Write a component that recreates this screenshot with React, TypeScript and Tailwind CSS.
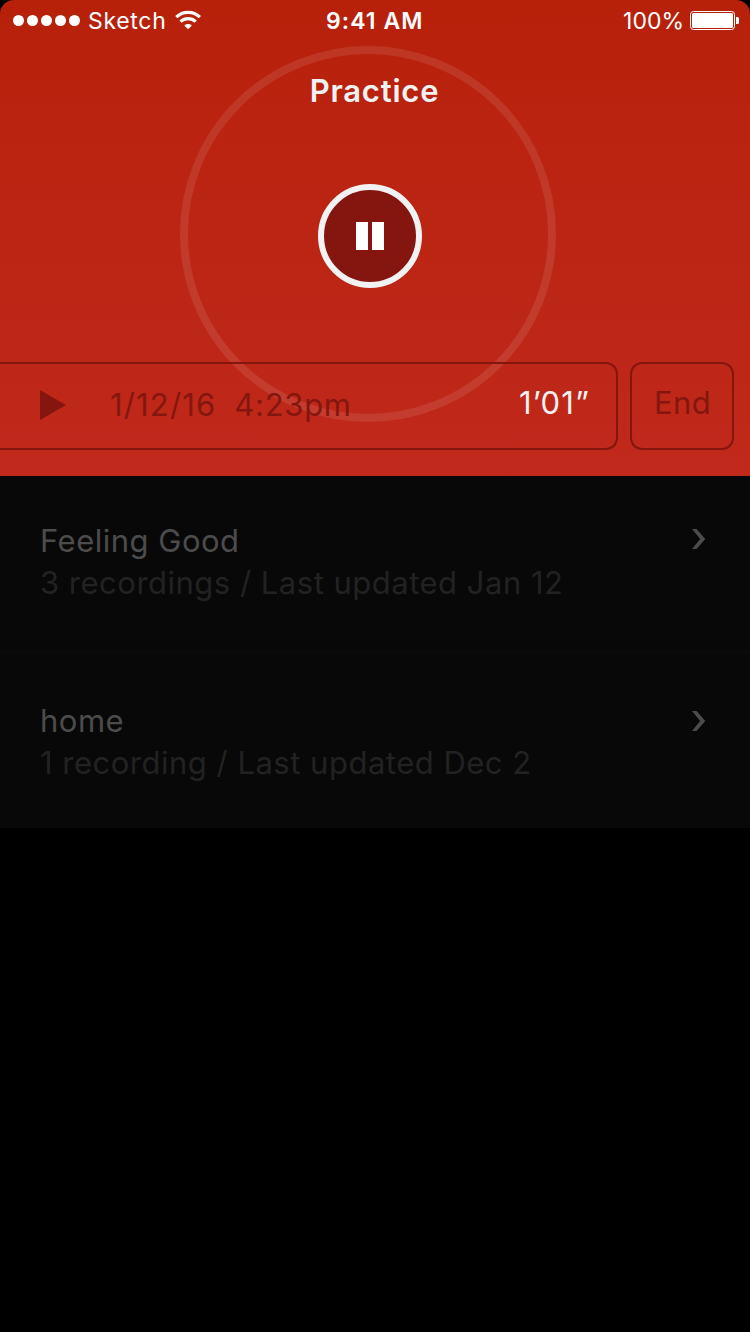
const recordings = [
  { title: "Feeling Good", detail: "3 recordings / Last updated Jan 12", row: "h-[178px] pt-[44px]", chevron: "mt-[9px]" },
  { title: "home", detail: "1 recording / Last updated Dec 2", row: "h-[174px] pt-[46px]", chevron: "mt-[11px]" },
];

function StatusBar() {
  return (
    <div className="relative flex h-10 items-center justify-between text-[23px] text-white">
      <div className="flex items-center pl-[13px]">
        <svg width="68" height="12" fill="white">
          {[0, 1, 2, 3, 4].map((i) => (
            <circle key={i} cx={5.5 + i * 14} cy="6.5" r="5.5" />
          ))}
        </svg>
        <span className="ml-[7px] pt-[2px] tracking-[0.7px]">Sketch</span>
        <svg className="ml-[8px]" width="27" height="20" viewBox="0 0 27 20" fill="none" stroke="white" strokeWidth="3.2">
          <path d="M1.3 7.2a17 17 0 0 1 23.6 0M5.5 11.6a11 11 0 0 1 15.2 0" />
          <path d="M9.3 15.4a5.6 5.6 0 0 1 7.6 0L13.1 19.2z" fill="white" stroke="none" />
        </svg>
      </div>
      <span className="absolute left-[326px] pt-[2px] font-semibold tracking-[1.05px]">9:41 AM</span>
      <div className="flex items-center pr-[11px]">
        <span className="pt-[2px]">100%</span>
        <svg className="ml-[6px]" width="49" height="19" fill="white">
          <rect x="0.5" y="0.5" width="44" height="18" rx="3" fill="none" stroke="white" />
          <rect x="2" y="2" width="41" height="15" rx="1.5" />
          <path d="M46 6h1.5q1.5 0 1.5 1.5v4q0 1.5-1.5 1.5H46z" />
        </svg>
      </div>
    </div>
  );
}

export default function App() {
  return (
    <main className="h-[1332px] w-[750px] overflow-hidden bg-black font-['Inter',sans-serif]">
      <header className="relative h-[476px] rounded-t-[14px] bg-linear-to-b from-[#b7210a] to-[#c0291b]">
        <svg className="absolute left-[180px] top-[46px]" width="376" height="376" fill="none">
          <circle cx="188" cy="188" r="184" stroke="#f2f2f2" strokeOpacity="0.1" strokeWidth="8" />
        </svg>
        <div className="relative flex h-full flex-col">
          <StatusBar />
          <h1 className="mt-[31px] h-10 pr-[1px] text-center text-[31px] leading-10 font-semibold tracking-[0.8px] text-[#f2f2f2]">Practice</h1>
          <button className="mt-[73px] ml-[318px] h-[104px] w-[104px]" aria-label="Pause">
            <svg width="104" height="104">
              <circle cx="52" cy="52" r="49" fill="#84160f" stroke="#f2f2f2" strokeWidth="6" />
              <path d="M38 38h12v28H38zM54 38h12v28H54z" fill="white" />
            </svg>
          </button>
          <div className="mt-[74px] flex h-[88px] gap-3 text-[31px] text-[#84160f]">
            <div className="flex w-[618px] items-center rounded-r-[12px] border-2 border-l-0 border-[#84160f] pb-[2px] pl-10">
              <svg width="26" height="30" fill="#84160f"><path d="M0 0 26 15 0 30z" /></svg>
              <span className="ml-[44px] tracking-[1.15px]">1/12/16</span>
              <span className="ml-[18px] tracking-[0.7px]">4:23pm</span>
              <span className="mr-[26px] ml-auto pb-1 tracking-[1.2px] text-[#f2f2f2]">1’01”</span>
            </div>
            <button className="w-[104px] rounded-[12px] border-2 border-[#84160f] pb-[6px] pl-[1px] tracking-[0.3px]">End</button>
          </div>
        </div>
      </header>
      <div className="divide-y-4 divide-[#0a0a0a] bg-[#080808]">
        {recordings.map((r) => (
          <section key={r.title} className={`px-10 text-[31px] leading-[42px] ${r.row}`}>
            <div className="flex justify-between text-[#4c4c4c]">
              <span className="tracking-[0.5px]">{r.title}</span>
              <svg className={`mr-[4px] ${r.chevron}`} width="14" height="20" fill="#4c4c4c"><path d="M0 0h4.5L13.3 10 4.5 20H0l8.2-10z" /></svg>
            </div>
            <p className="tracking-[0.5px] text-[#222]">{r.detail}</p>
          </section>
        ))}
      </div>
    </main>
  );
}
